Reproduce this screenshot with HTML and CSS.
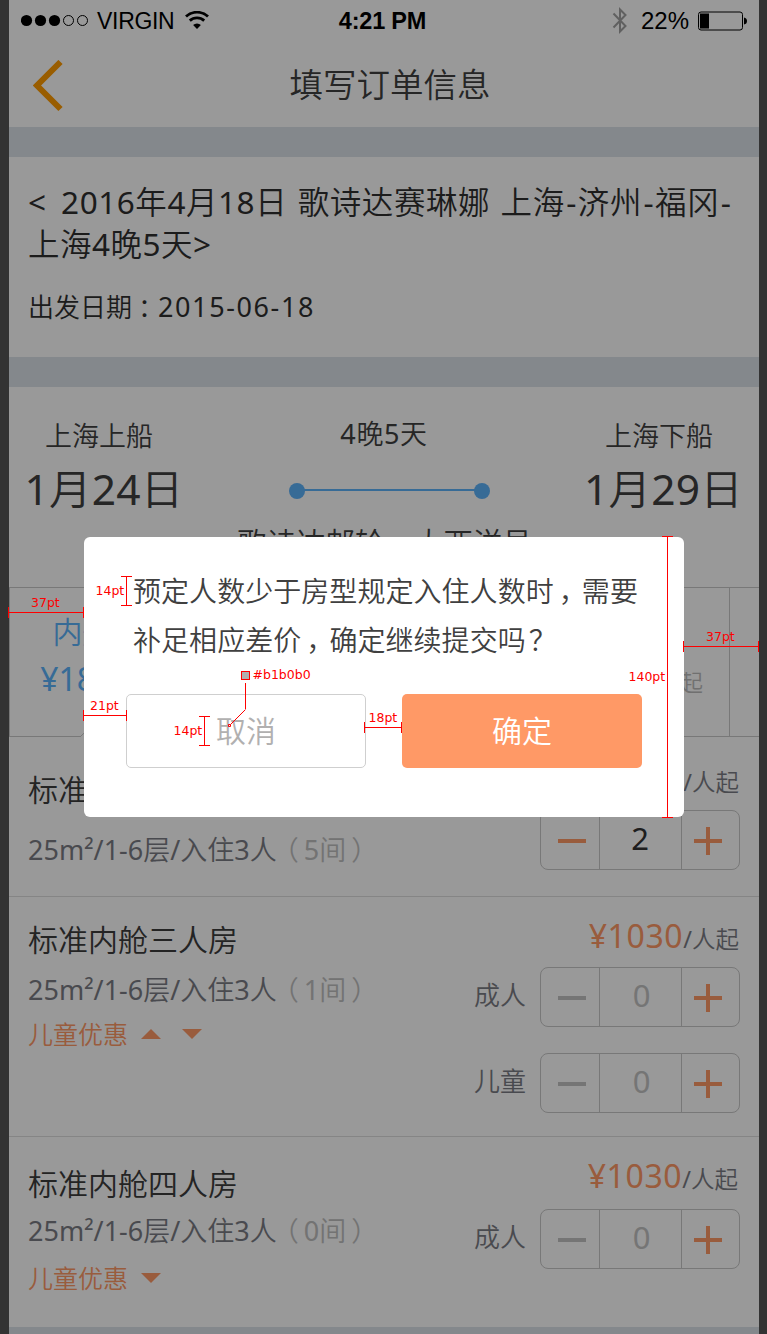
FILE: index.html
```html
<!DOCTYPE html>
<html lang="zh-CN">
<head>
<meta charset="utf-8">
<title>填写订单信息</title>
<link rel="stylesheet" href="styles.css">
</head>
<body>
<main class="phone">
  <div class="status">
    <div class="status-left">
      <svg class="signal" width="69" height="14" viewBox="0 0 69 14">
        <circle cx="5.500" cy="6.500" r="5.600"/><circle cx="19.500" cy="6.500" r="5.600"/><circle cx="33.500" cy="6.500" r="5.600"/>
        <circle class="empty" cx="47.500" cy="6.500" r="5"/><circle class="empty" cx="61.500" cy="6.500" r="5"/>
      </svg>
      <span class="carrier">VIRGIN</span>
      <svg class="wifi" width="24" height="18" viewBox="0 0 24 18">
        <path class="arc" d="M1 5.600a16 16 0 0 1 22 0M4.800 9.600a10.600 10.600 0 0 1 14.400 0"/>
        <path d="M12 18l-3.900-4a5.800 5.800 0 0 1 7.800 0z"/>
      </svg>
    </div>
    <div class="clock">4:21 PM</div>
    <div class="status-right">
      <svg class="bluetooth" width="16" height="27" viewBox="0 0 16 27"><path d="M1.500 6.500l12 12.500-5.500 5.500v-22l5.500 5.500-12 12.500"/></svg>
      <span class="percent">22%</span>
      <svg class="battery" width="49" height="20" viewBox="0 0 49 20">
        <rect class="shell" x=".5" y="1" width="44" height="18" rx="2.500"/>
        <path d="M2 2.500h9v15h-9zM46 6.500q3 .5 3 3.500t-3 3.500z"/>
      </svg>
    </div>
  </div>
  <header class="nav">
    <svg class="back" width="32" height="52" viewBox="0 0 32 52"><path d="M27.500 2L4 25.500l23.500 23.500"/></svg>
    <h1>填写订单信息</h1>
  </header>
  <div class="band"></div>

  <section class="trip">
    <h2><span class="angle">&lt;</span> 2016年4月18日 歌诗达赛琳娜 上海<span class="dash">-</span>济州<span class="dash">-</span>福冈<span class="dash">-</span><br><span class="second">上海4晚5天&gt;</span></h2>
    <p class="depart">出发日期<span class="colon">：</span><span class="date">2015-06-18</span></p>
  </section>
  <div class="band"></div>

  <section class="journey">
    <div class="stop start"><p class="place">上海上船</p><p class="day">1月24日</p></div>
    <div class="middle">
      <p class="nights">4晚5天</p>
      <svg class="route" width="202" height="16" viewBox="0 0 202 16"><path d="M8 7h186"/><circle cx="8" cy="8" r="8"/><circle cx="193" cy="8" r="8"/></svg>
      <p class="ship">歌诗达邮轮－大西洋号</p>
    </div>
    <div class="stop end"><p class="place">上海下船</p><p class="day">1月29日</p></div>
  </section>

  <nav class="tabs">
    <div class="tab active"><p class="cabin">内舱房</p><p class="fare">¥1899<small>起</small></p>
      <svg class="notch" width="36" height="19" viewBox="0 0 36 19"><path class="gap" d="M0 18.500h36"/><path d="M0 18L18 1l18 17"/></svg>
    </div>
    <div class="tab"></div>
    <div class="tab"></div>
    <div class="tab last"><p class="fare"><small>起</small></p></div>
    <div class="rest"></div>
  </nav>

  <section class="room room-two">
    <div class="info">
      <h3>标准内舱双人房</h3>
      <p class="spec">25m²/1-6层/入住3人<span class="left"><i class="open">（</i>5间<i class="close">）</i></span></p>
    </div>
    <div class="booking">
      <p class="price"><b>¥1030</b>/人起</p>
      <div class="guests"><div class="stepper on"><span class="cell"><i class="minus"></i></span><span class="num">2</span><span class="cell"><i class="plus"></i></span></div></div>
    </div>
  </section>

  <section class="room room-three">
    <div class="info">
      <h3>标准内舱三人房</h3>
      <p class="spec">25m²/1-6层/入住3人<span class="left"><i class="open">（</i>1间<i class="close">）</i></span></p>
      <p class="promo">儿童优惠<i class="tri up"></i><i class="tri down"></i></p>
    </div>
    <div class="booking">
      <p class="price"><b>¥1030</b>/人起</p>
      <div class="guests"><span class="who">成人</span><div class="stepper"><span class="cell"><i class="minus"></i></span><span class="num">0</span><span class="cell"><i class="plus"></i></span></div></div>
      <div class="guests"><span class="who">儿童</span><div class="stepper"><span class="cell"><i class="minus"></i></span><span class="num">0</span><span class="cell"><i class="plus"></i></span></div></div>
    </div>
  </section>

  <section class="room room-four">
    <div class="info">
      <h3>标准内舱四人房</h3>
      <p class="spec">25m²/1-6层/入住3人<span class="left"><i class="open">（</i>0间<i class="close">）</i></span></p>
      <p class="promo">儿童优惠<i class="tri down"></i></p>
    </div>
    <div class="booking">
      <p class="price"><b>¥1030</b>/人起</p>
      <div class="guests"><span class="who">成人</span><div class="stepper"><span class="cell"><i class="minus"></i></span><span class="num">0</span><span class="cell"><i class="plus"></i></span></div></div>
    </div>
  </section>
  <div class="band"></div>
</main>

<div class="overlay"></div>
<div class="dialog">
  <p class="message">预定人数少于房型规定入住人数时<span class="comma">，</span>需要<br>补足相应差价<span class="comma">，</span>确定继续提交吗<span class="ask">？</span></p>
  <div class="actions"><div class="btn cancel">取消</div><div class="btn confirm">确定</div></div>
</div>

<svg class="notes" width="767" height="1334" viewBox="0 0 767 1334">
  <path class="rule" d="M8.500 607v11M8.500 612.500h75M83.500 607v11M121 576.500h11M121 605.500h11M126.500 576v29M83.500 710v11M83.500 715.500h43M126.500 710v11M199 716.500h11M199 745.500h11M204.500 716v29M364.500 722v11M364.500 727.500h37M401.500 722v11M662 536.500h11M667.500 536v281M662 817.500h11M683.500 641v11M683.500 646.500h75M758.500 641v11M245.500 683v26"/>
  <path class="leader" d="M245.500 709.500l-15 15M228.500 724.500h2v2h-2z"/>
  <rect class="swatch" x="241.500" y="671.500" width="8" height="8"/>
  <text x="31" y="607">37pt</text><text x="95.500" y="595">14pt</text><text x="90" y="710">21pt</text><text x="173.500" y="735">14pt</text><text x="252.500" y="679">#b1b0b0</text><text x="368.500" y="722">18pt</text><text x="628.500" y="681">140pt</text><text x="706" y="641">37pt</text>
</svg>
</body>
</html>
```
FILE: styles.css
```css
* { box-sizing: border-box; margin: 0; padding: 0; }
html { background: #333; }
body {
  position: relative;
  width: 767px;
  height: 1334px;
  overflow: hidden;
  font-family: "Noto Sans", "Noto Sans CJK SC DemiLight", "Noto Sans CJK SC", sans-serif;
  font-weight: 400;
  color: #404040;
}
h1, h2, h3 { font-weight: 400; }
i { font-style: normal; }
svg { display: block; }
.phone { width: 750px; height: 1334px; margin-left: 9px; background: #fff; overflow: hidden; }
.band { height: 30px; background: #dce3e9; }

.status {
  display: grid; grid-template-columns: 1fr auto 1fr; align-items: center;
  height: 42px; padding: 0 12px;
  font: 400 23px/42px "Liberation Sans", Arial, sans-serif; color: #000;
}
.status-left, .status-right { display: flex; align-items: center; }
.status-right { justify-content: flex-end; }
.signal .empty { fill: none; stroke: #000; stroke-width: 1; }
.carrier { margin-left: 7px; width: 78px; letter-spacing: -.3px; }
.wifi { margin: -2px 0 0 10px; }
.wifi .arc { fill: none; stroke: #000; stroke-width: 2.8; }
.clock { font-weight: 700; font-size: 23.500px; letter-spacing: -.2px; padding-right: 3px; }
.bluetooth { margin-top: -1px; }
.bluetooth path { fill: none; stroke: #a0a0a0; stroke-width: 2; }
.battery .shell { fill: none; stroke: #000; stroke-width: 1; }
.percent { margin: 0 9px 0 13px; font-size: 24px; }

.nav { position: relative; height: 85px; line-height: 85px; text-align: center; }
.nav h1 { font-size: 33.500px; padding-left: 12px; }
.back { position: absolute; left: 24px; top: 18px; }
.back path { fill: none; stroke: #ff9b00; stroke-width: 6; }

.trip { height: 200px; padding: 24px 19px 0; color: #303030; }
.trip h2 { font-size: 31.500px; line-height: 42px; letter-spacing: .55px; word-spacing: 1.800px; white-space: nowrap; }
.trip .angle { letter-spacing: 4.500px; }
.trip .dash { letter-spacing: 1.500px; margin-left: 1.500px; }
.trip .second { letter-spacing: .5px; }
.depart { margin-top: 22px; font-size: 26px; line-height: 40px; }
.colon { margin: 0 -6px 0 6px; }
.depart .date { font-size: 27px; letter-spacing: 1.600px; }

.journey { display: grid; grid-template-columns: 190px 1fr 190px; height: 200px; padding-top: 29px; text-align: center; }
.place, .nights { font-size: 27px; line-height: 40px; }
.day { margin-top: 13px; font-size: 42.500px; line-height: 40px; letter-spacing: .2px; white-space: nowrap; }
.place { padding-right: 10px; }
.end .day { padding-right: 1px; }
.nights { margin-top: -2px; letter-spacing: .6px; }
.route { margin: 29px 0 0 90px; }
.route path { stroke: #5db2fa; stroke-width: 2; }
.route circle { fill: #5db2fa; }
.ship { margin-top: 24px; padding-left: 1px; font-size: 29.500px; line-height: 40px; }

.tabs { display: flex; height: 150px; border: 1px solid #c8c8c8; border-width: 1px 0; }
.tab { position: relative; width: 180px; padding-top: 24px; text-align: center; font-size: 30px; line-height: 40px; }
.active { padding-right: 4px; border-left: 1px solid #c8c8c8; color: #5db2fa; }
.fare { margin-top: 7px; font-size: 32px; }
.fare small { font-size: 23px; }
.last { width: 181px; padding-top: 24px; border-right: 1px solid #c8c8c8; color: #bbb; }
.last .fare { margin-top: 47px; padding-right: 26px; text-align: right; }
.notch { position: absolute; left: 71px; bottom: -1px; fill: none; stroke: #c8c8c8; }
.notch .gap { stroke: #fff; }

.room { display: flex; justify-content: space-between; padding: 0 19px; border-bottom: 1px solid #dedede; }
.info { display: flex; flex-direction: column; }
.info h3 { font-size: 30px; line-height: 40px; color: #3c3c3c; }
.spec { font-size: 27px; line-height: 40px; color: #7b7c84; white-space: nowrap; }
.left { color: #c0c0c0; }
.left .open { margin: 0 5px 0 -5px; }
.left .close { margin: 0 -5px 0 5px; }
.promo { display: flex; align-items: center; font-size: 25px; line-height: 40px; color: #ff9966; }
.tri { width: 20px; height: 10px; background: #ff9966; }
.up { clip-path: polygon(50% 0, 100% 100%, 0 100%); margin-left: 13px; }
.down { clip-path: polygon(0 0, 100% 0, 50% 100%); margin-left: 13px; }
.up + .down { margin-left: 21px; }
.booking { display: flex; flex-direction: column; align-items: flex-end; }
.price { height: 41px; font-size: 23.500px; line-height: 40px; color: #7b7c84; white-space: nowrap; }
.price b { margin-right: 0; font-weight: 400; font-size: 32px; letter-spacing: .6px; color: #ff9966; }
.price { padding-right: 1px; }
.guests { display: flex; align-items: center; }
.who { margin-right: 14px; font-size: 26px; line-height: 56px; padding-bottom: 4px; color: #7b7c84; }
.stepper { display: grid; grid-template-columns: 58px 83px 57px; width: 200px; height: 60px; border: 1px solid #c8c8c8; border-radius: 8px; }
.cell { display: flex; align-items: center; justify-content: center; }
.cell:first-child { padding-left: 4px; }
.cell:last-child { padding-right: 5px; }
.num { border: 1px solid #c8c8c8; border-width: 0 1px; font-size: 31px; line-height: 54px; text-align: center; padding-left: 2px; color: #c4c4c4; }
.on .num { color: #333; padding: 0 1px 0 0; }
.minus, .plus { display: block; width: 28px; height: 4px; margin-top: 2px; background: #c4c4c4; }
.on .minus { background: #ff9966; }
.plus { height: 28px; background: linear-gradient(#ff9966, #ff9966) center / 28px 4px no-repeat, linear-gradient(#ff9966, #ff9966) center / 4px 28px no-repeat; }

.room-two { height: 160px; }
.room-two .info { padding-top: 33px; gap: 20px; }
.room-two .booking { padding-top: 22px; gap: 10px; }
.room-three { height: 240px; }
.room-three .info { padding-top: 23px; gap: 10px; }
.room-three .promo { margin-top: -6px; }
.room-three .booking { padding-top: 19px; }
.room-three .guests { margin-top: 10px; }
.room-three .guests + .guests { margin-top: 26px; }
.room-four { height: 190px; border: 0; }
.room-four .info { padding-top: 27px; gap: 7px; }
.room-four .booking { padding-top: 19px; gap: 12px; }
.room-four .price { padding-right: 2px; }

.overlay { position: absolute; left: 9px; top: 0; width: 750px; height: 1334px; background: rgba(0, 0, 0, .4); }
.dialog { position: absolute; left: 84px; top: 537px; width: 600px; height: 280px; padding: 30px 42px 0; border-radius: 6px; background: #fff; }
.message { padding-left: 7px; font-size: 28px; line-height: 49px; letter-spacing: .05px; white-space: nowrap; }
.comma { margin: 0 -5px 0 5px; }
.ask { margin-left: 3px; }
.actions { display: flex; gap: 36px; margin-top: 29px; }
.btn { width: 240px; height: 74px; border-radius: 5px; font-size: 30px; line-height: 74px; text-align: center; }
.cancel { border: 1px solid #cfcfcf; line-height: 72px; color: #b1b0b0; }
.confirm { background: #ff9966; color: #fff; }

.notes { position: absolute; left: 0; top: 0; }
.notes path { fill: none; stroke: #f00; stroke-width: 1; }
.notes .rule { shape-rendering: crispEdges; }
.notes .swatch { fill: #b1b0b0; stroke: #f00; }
.notes text { fill: #f00; font: 400 12.500px "DejaVu Sans", Verdana, sans-serif; }
```
